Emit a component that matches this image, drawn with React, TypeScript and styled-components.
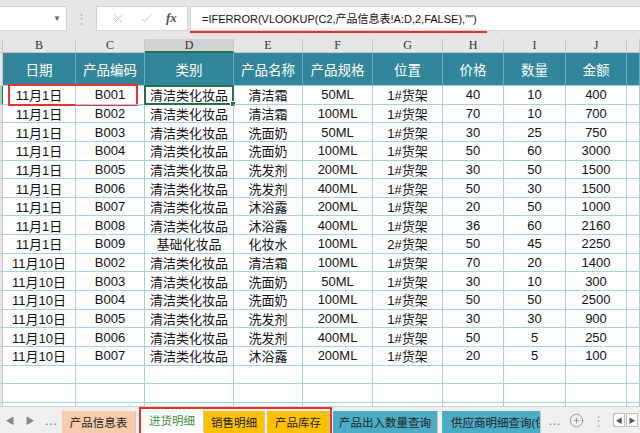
import React from "react";
import styled, { createGlobalStyle } from "styled-components";
import { X, Check, CirclePlus } from "lucide-react";

const GlobalStyle = createGlobalStyle`
  html, body {
    margin: 0;
    padding: 0;
    background: #fff;
    overflow: hidden;
  }
  * {
    box-sizing: border-box;
  }
`;

const CJK = `"Liberation Sans", "Noto Sans CJK SC", sans-serif`;

// column widths, first one is the (scrolled) row header strip
const COLS = [3, 73, 69, 89, 69, 70, 70, 61, 62, 61, 13];
const LETTERS = ["", "B", "C", "D", "E", "F", "G", "H", "I", "J", ""];
const HEADERS = ["", "日期", "产品编码", "类别", "产品名称", "产品规格", "位置", "价格", "数量", "金额", ""];

const rows: (string | number)[][] = [
  ["11月1日", "B001", "清洁类化妆品", "清洁霜", "50ML", "1#货架", 40, 10, 400],
  ["11月1日", "B002", "清洁类化妆品", "清洁霜", "100ML", "1#货架", 70, 10, 700],
  ["11月1日", "B003", "清洁类化妆品", "洗面奶", "50ML", "1#货架", 30, 25, 750],
  ["11月1日", "B004", "清洁类化妆品", "洗面奶", "100ML", "1#货架", 50, 60, 3000],
  ["11月1日", "B005", "清洁类化妆品", "洗发剂", "200ML", "1#货架", 30, 50, 1500],
  ["11月1日", "B006", "清洁类化妆品", "洗发剂", "400ML", "1#货架", 50, 30, 1500],
  ["11月1日", "B007", "清洁类化妆品", "沐浴露", "200ML", "1#货架", 20, 50, 1000],
  ["11月1日", "B008", "清洁类化妆品", "沐浴露", "400ML", "1#货架", 36, 60, 2160],
  ["11月1日", "B009", "基础化妆品", "化妆水", "100ML", "2#货架", 50, 45, 2250],
  ["11月10日", "B002", "清洁类化妆品", "清洁霜", "100ML", "1#货架", 70, 20, 1400],
  ["11月10日", "B003", "清洁类化妆品", "洗面奶", "50ML", "1#货架", 30, 10, 300],
  ["11月10日", "B004", "清洁类化妆品", "洗面奶", "100ML", "1#货架", 50, 50, 2500],
  ["11月10日", "B005", "清洁类化妆品", "洗发剂", "200ML", "1#货架", 30, 30, 900],
  ["11月10日", "B006", "清洁类化妆品", "洗发剂", "400ML", "1#货架", 50, 5, 250],
  ["11月10日", "B007", "清洁类化妆品", "沐浴露", "200ML", "1#货架", 20, 5, 100],
];

const Page = styled.div`
  width: 640px;
  height: 433px;
  display: flex;
  flex-direction: column;
  overflow: hidden;
  background: #fff;
  font-family: ${CJK};
`;

/* ---------- formula bar ---------- */

const FormulaBar = styled.div`
  height: 39px;
  flex: none;
  display: flex;
  align-items: center;
  gap: 2px;
  background: #e6e6e6;
  padding-bottom: 3px;
`;

const NameBox = styled.div`
  width: 67px;
  height: 25px;
  background: #fff;
  border: 1px solid #d4d4d4;
  border-left: none;
  display: flex;
  align-items: center;
  justify-content: flex-end;
  padding-right: 5px;
  color: #666;
  font-size: 8px;
`;

const Grip = styled.div`
  width: 25px;
  text-align: center;
  color: #b5b5b5;
  font-size: 13px;
`;

const ButtonBox = styled.div`
  width: 92px;
  height: 25px;
  background: #fff;
  border: 1px solid #d4d4d4;
  display: flex;
  align-items: center;
  justify-content: space-around;
  padding: 0 4px 0 8px;
  color: #c3c3c3;
`;

const Fx = styled.span`
  font-family: "Liberation Serif", serif;
  font-style: italic;
  font-size: 13px;
  color: #555;
  font-weight: bold;
`;

const FormulaInput = styled.div`
  position: relative;
  flex: 1;
  height: 25px;
  background: #fff;
  border: 1px solid #d4d4d4;
  border-right: none;
  display: flex;
  align-items: center;
  padding-left: 11px;
  font-size: 11px;
  color: #111;
  white-space: nowrap;
`;

const Underline = styled.div`
  position: absolute;
  left: -1px;
  bottom: -3px;
  width: 297px;
  height: 2px;
  background: #e8322f;
`;

/* ---------- sheet ---------- */

const Sheet = styled.div`
  flex: 1;
  overflow: hidden;
  display: grid;
  grid-template-columns: ${COLS.map((c) => `${c}px`).join(" ")};
  grid-template-rows: 14px 33px;
  grid-auto-rows: 18.65px;
  align-content: start;
`;

const Letter = styled.div<{ $active?: boolean }>`
  background: ${(p) => (p.$active ? "#d2d2d2" : "#e6e6e6")};
  border-right: 1px solid #c8c8c8;
  border-bottom: ${(p) => (p.$active ? "2px solid #217346" : "1px solid #c8c8c8")};
  display: flex;
  align-items: center;
  justify-content: center;
  font-family: "Liberation Serif", serif;
  font-size: 12px;
  color: #333;
`;

const HeadCell = styled.div`
  background: #31869b;
  border-right: 1px solid #6aaebf;
  border-bottom: 1px solid #a7d1db;
  display: flex;
  align-items: center;
  justify-content: center;
  color: #fff;
  font-size: 13.5px;
  white-space: nowrap;
  overflow: hidden;
`;

const RowStrip = styled.div<{ $active?: boolean }>`
  background: ${(p) => (p.$active ? "#9fd5b7" : "#e6e6e6")};
  border-right: 1px solid ${(p) => (p.$active ? "#217346" : "#c8c8c8")};
  border-bottom: 1px solid #c8c8c8;
`;

const Cell = styled.div`
  position: relative;
  border-right: 1px solid #a7d1db;
  border-bottom: 1px solid #a7d1db;
  display: flex;
  align-items: center;
  justify-content: center;
  font-size: 13px;
  color: #111;
  white-space: nowrap;
`;

const Selection = styled.div`
  position: absolute;
  left: -1px;
  top: -1px;
  right: -1px;
  bottom: -1px;
  border: 2px solid #217346;
  pointer-events: none;
`;

const FillHandle = styled.div`
  position: absolute;
  right: -4px;
  bottom: -4px;
  width: 6px;
  height: 6px;
  background: #217346;
  border: 1px solid #fff;
`;

// red mark drawn over B2:C2
const Annotation = styled.div`
  position: absolute;
  left: 5px;
  top: -2px;
  width: 130px;
  height: 22px;
  border: 2px solid #e8322f;
  pointer-events: none;
`;

/* ---------- tabs ---------- */

const TabBar = styled.div`
  height: 27px;
  flex: none;
  display: flex;
  align-items: flex-end;
  background: #f0f0f0;
  border-top: 1px solid #d0d0d0;
  color: #777;
`;

const Nav = styled.div<{ $w: number }>`
  width: ${(p) => p.$w}px;
  height: 100%;
  display: flex;
  align-items: center;
  justify-content: center;
  font-size: 9px;
  color: #888;
`;

const Tab = styled.div<{ $bg: string; $w: number; $color?: string }>`
  width: ${(p) => p.$w}px;
  height: 22px;
  flex: none;
  background: ${(p) => p.$bg};
  color: ${(p) => p.$color || "#222"};
  display: flex;
  align-items: center;
  justify-content: center;
  border-right: 1px solid #c8c8c8;
  white-space: nowrap;
  overflow: hidden;
  font-size: 11.5px;
`;

const ClippedTab = styled(Tab)`
  justify-content: flex-start;
  padding-left: 9px;
`;

const Marked = styled.div`
  display: flex;
  align-items: flex-end;
  height: 26px;
  border: 2px solid #e8322f;
  border-bottom: none;
  margin-left: 1px;
`;

const ActiveTab = styled(Tab)`
  height: 24px;
  border-bottom: 2px solid #fff;
`;

const Spacer = styled.div<{ $w: number }>`
  width: ${(p) => p.$w}px;
  flex: none;
`;

const Tools = styled.div`
  flex: 1;
  height: 100%;
  display: flex;
  align-items: center;
  justify-content: flex-end;
  gap: 8px;
  padding-right: 2px;
  color: #888;
`;

const Dots = styled.span<{ $light?: boolean }>`
  color: ${(p) => (p.$light ? "#bbb" : "#777")};
  font-size: 13px;
`;

const ScrollBtns = styled.div`
  display: flex;
  gap: 1px;
`;

const ScrollBtn = styled.div`
  width: 12px;
  height: 14px;
  border: 1px solid #bdbdbd;
  background: #fff;
  display: flex;
  align-items: center;
  justify-content: center;
  font-size: 7px;
  color: #555;
`;

export default function App() {
  return (
    <Page>
      <GlobalStyle />
      <FormulaBar>
        <NameBox>▼</NameBox>
        <Grip>⋮</Grip>
        <ButtonBox>
          <X size={15} strokeWidth={1.5} />
          <Check size={15} strokeWidth={1.5} />
          <Fx>fx</Fx>
        </ButtonBox>
        <FormulaInput>
          =IFERROR(VLOOKUP(C2,产品信息表!A:D,2,FALSE),"")
          <Underline />
        </FormulaInput>
      </FormulaBar>

      <Sheet>
        {LETTERS.map((l, i) => (
          <Letter key={"l" + i} $active={l === "D"}>
            {l}
          </Letter>
        ))}
        {HEADERS.map((h, i) =>
          i === 0 ? <RowStrip key="h0" /> : <HeadCell key={"h" + i}>{h}</HeadCell>
        )}
        {rows.map((r, ri) => (
          <React.Fragment key={ri}>
            <RowStrip $active={ri === 0} />
            {r.map((v, ci) => (
              <Cell key={ci}>
                {ri === 0 && ci === 0 && <Annotation />}
                {v}
                {ri === 0 && ci === 2 && (
                  <Selection>
                    <FillHandle />
                  </Selection>
                )}
              </Cell>
            ))}
            <Cell />
          </React.Fragment>
        ))}
        {[0, 1, 2].map((ri) => (
          <React.Fragment key={"e" + ri}>
            <RowStrip />
            {COLS.slice(1).map((_, ci) => (
              <Cell key={ci} />
            ))}
          </React.Fragment>
        ))}
      </Sheet>

      <TabBar>
        <Nav $w={20}>◀</Nav>
        <Nav $w={20}>▶</Nav>
        <Nav $w={22}>
          <Dots>…</Dots>
        </Nav>
        <Tab $bg="#f8cbad" $w={74}>产品信息表</Tab>
        <Spacer $w={2} />
        <Marked>
          <ActiveTab $bg="#fff" $w={63} $color="#3c8f3a">进货明细</ActiveTab>
          <Tab $bg="#ffc000" $w={61}>销售明细</Tab>
          <Spacer $w={2} />
          <Tab $bg="#ffc000" $w={63}>产品库存</Tab>
        </Marked>
        <Spacer $w={1} />
        <Tab $bg="#4bacc6" $w={105}>产品出入数量查询</Tab>
        <Spacer $w={4} />
        <ClippedTab $bg="#4bacc6" $w={99}>供应商明细查询(供</ClippedTab>
        <Tools>
          <Dots>…</Dots>
          <CirclePlus size={15} strokeWidth={1.3} />
          <Dots $light>⋮</Dots>
          <ScrollBtns>
            <ScrollBtn>◀</ScrollBtn>
            <ScrollBtn>▶</ScrollBtn>
          </ScrollBtns>
        </Tools>
      </TabBar>
    </Page>
  );
}
